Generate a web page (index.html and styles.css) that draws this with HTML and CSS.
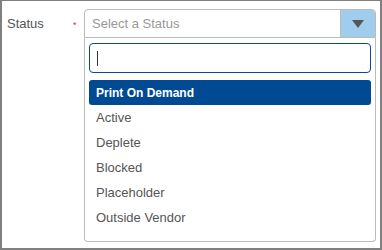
FILE: index.html
```html
<!DOCTYPE html>
<html lang="en">
<head>
    <meta charset="UTF-8">
    <title>Status</title>
    <link rel="stylesheet" href="styles.css">
</head>
<body>
    <div class="frame">
        <div class="form-row">
            <label class="field-label">Status</label>
            <span class="required">*</span>
            <div class="select-wrap">
                <div class="select-box">
                    <span class="placeholder">Select a Status</span>
                    <span class="select-arrow"><span class="triangle"></span></span>
                </div>
                <div class="dropdown">
                    <div class="search-box"><span class="caret"></span></div>
                    <ul class="options">
                        <li class="option selected">Print On Demand</li>
                        <li class="option">Active</li>
                        <li class="option">Deplete</li>
                        <li class="option">Blocked</li>
                        <li class="option">Placeholder</li>
                        <li class="option">Outside Vendor</li>
                    </ul>
                </div>
            </div>
        </div>
    </div>
</body>
</html>
```

FILE: styles.css
```css
html, body {
    margin: 0;
    padding: 0;
}

body {
    font-family: "Liberation Sans", Arial, sans-serif;
    font-size: 13px;
    color: #555;
    background-color: white;
}

.frame {
    box-sizing: border-box;
    width: 382px;
    height: 250px;
    border: 2px solid #808080;
    border-top-width: 1px;
}

.form-row {
    display: flex;
    align-items: flex-start;
    padding: 8px 0 0 5px;
}

.field-label {
    width: 66px;
    padding-top: 7px;
    color: #555;
}

.required {
    width: 11px;
    padding-top: 12px;
    color: #e0245e;
    font-size: 9px;
    line-height: 1;
}

.select-wrap {
    width: 292px;
}

.select-box {
    display: flex;
    height: 29px;
    box-sizing: border-box;
    border: 1px solid #bbb;
    border-radius: 4px 4px 0 0;
    overflow: hidden;
}

.placeholder {
    flex: 1;
    padding: 6px 0 0 7px;
    color: #999;
}

.select-arrow {
    width: 34px;
    background-color: #a0cdee;
    border-left: 1px solid #bbb;
    display: flex;
    justify-content: center;
    align-items: center;
}

.triangle {
    width: 0;
    height: 0;
    border-left: 6px solid transparent;
    border-right: 6px solid transparent;
    border-top: 8px solid #555;
}

.dropdown {
    box-sizing: border-box;
    height: 204px;
    border: 1px solid #bbb;
    border-top: none;
    border-radius: 0 0 4px 4px;
    padding: 5px 4px 0 4px;
}

.search-box {
    box-sizing: border-box;
    height: 30px;
    border: 1px solid #0b4a8f;
    border-radius: 4px;
    padding: 7px 0 0 7px;
}

.caret {
    display: block;
    width: 1px;
    height: 15px;
    background-color: #333;
}

.options {
    list-style: none;
    margin: 7px 0 0 0;
    padding: 0;
}

.option {
    height: 25px;
    line-height: 26px;
    padding-left: 7px;
    color: #555;
}

.option.selected {
    background-color: #004a94;
    color: white;
    font-weight: bold;
    font-size: 12px;
    border-radius: 3px;
}
```
